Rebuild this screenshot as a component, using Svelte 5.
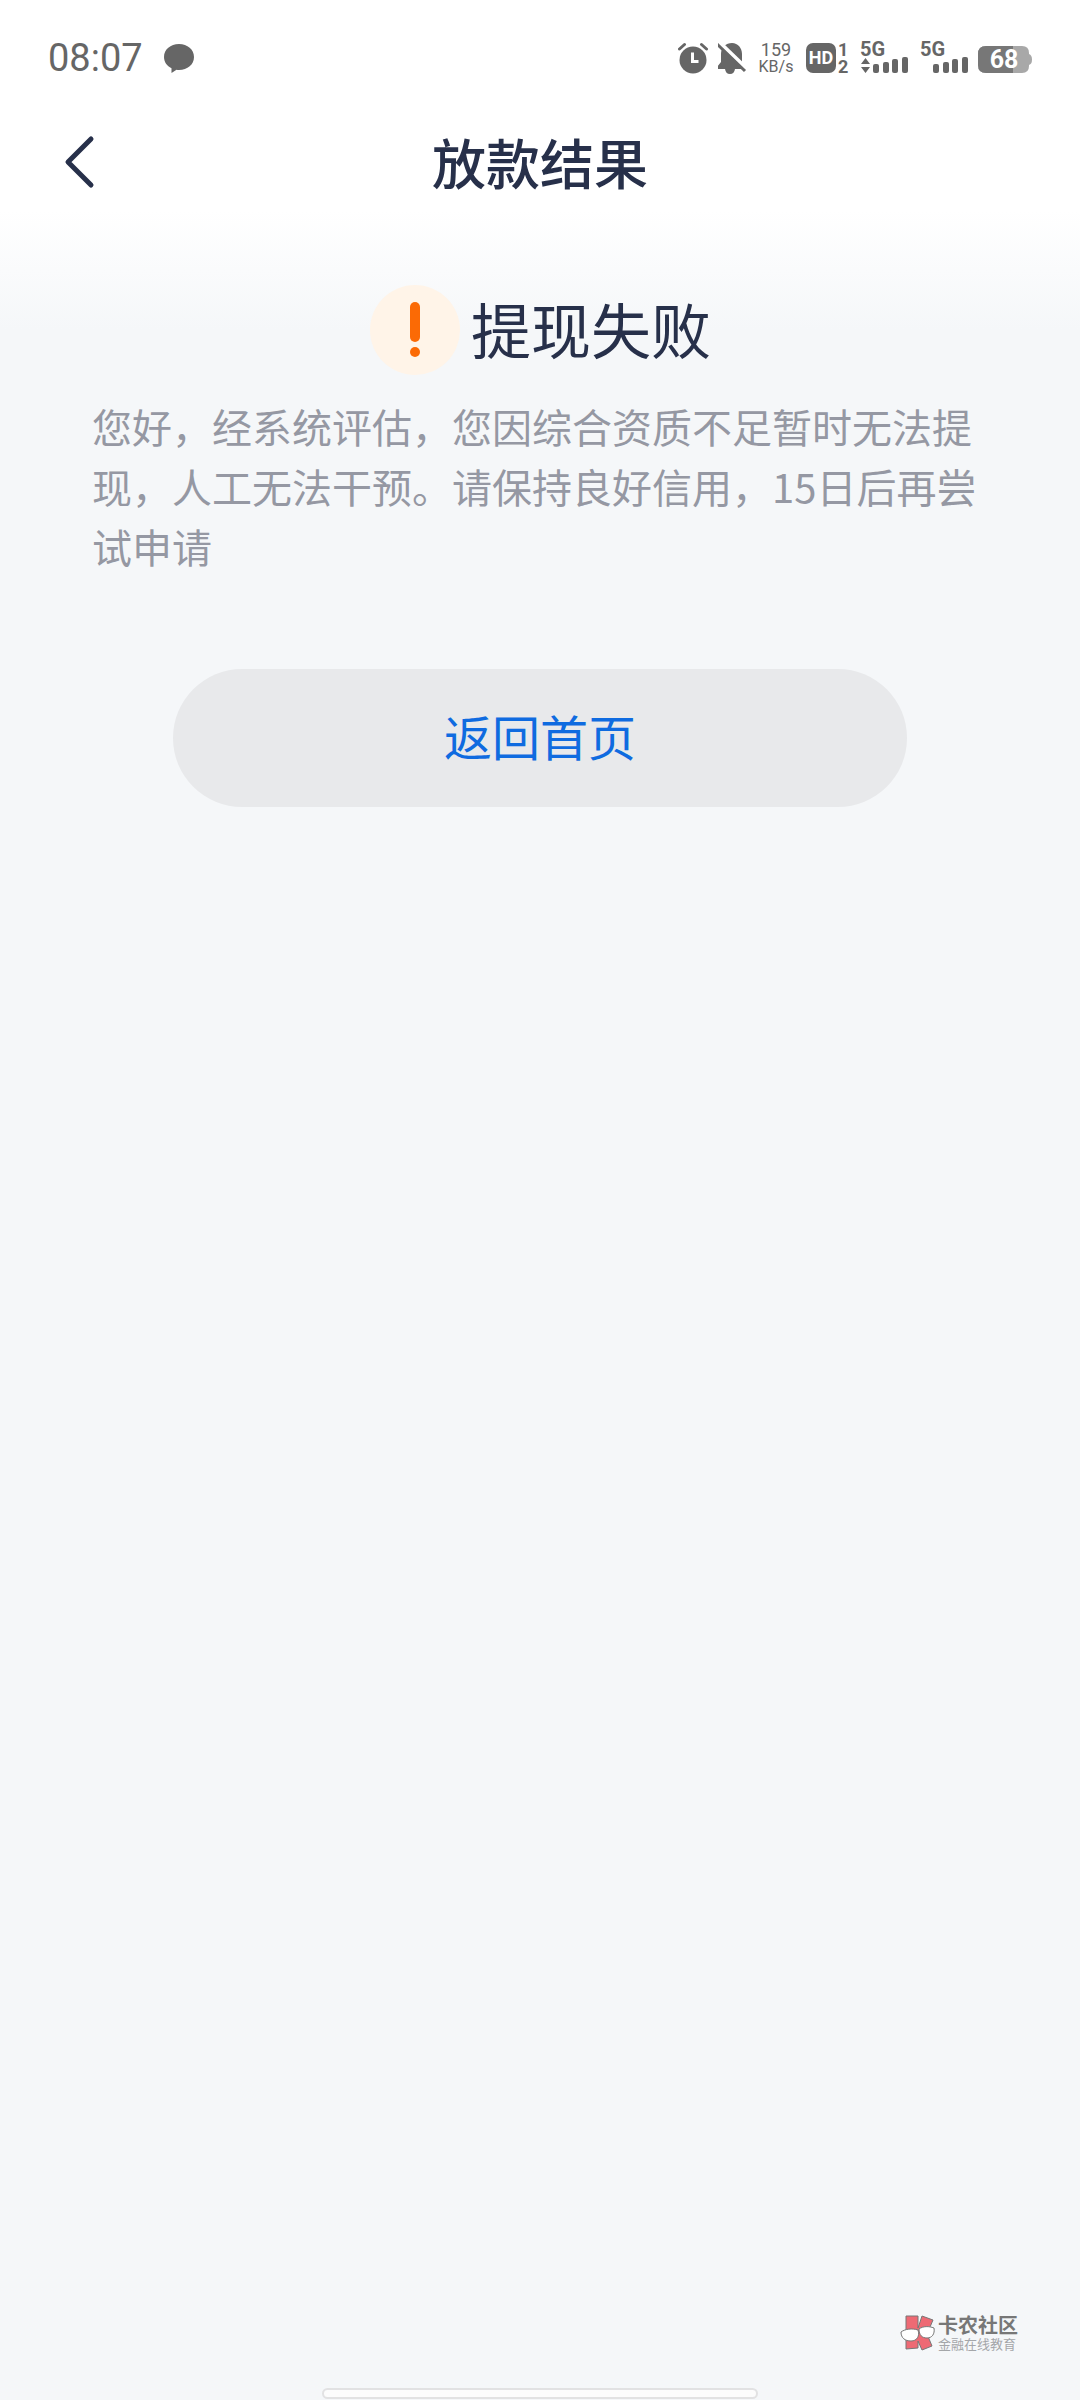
<script lang="ts">
  let title: string = '放款结果';
  let status: string = '提现失败';
  let message: string =
    '您好，经系统评估，您因综合资质不足暂时无法提现，人工无法干预。请保持良好信用，15日后再尝试申请';

  let time: string = '08:07';
  let speed: string = '159';
  let battery: number = 68;

  // two SIM cards, only the first one carries data
  const sims = [{ data: true }, { data: false }];

  // signal bars: x offset and height
  const bars = [
    { x: 15, h: 9 },
    { x: 25, h: 11 },
    { x: 34, h: 14 },
    { x: 44, h: 16 }
  ];
</script>

<div class="page">
  <div class="statusbar">
    <div class="left">
      <span class="time">{time}</span>
      <svg width="32" height="30" viewBox="0 0 32 30" aria-hidden="true">
        <path d="M16 1C7.500 1 1 6.500 1 14c0 5 3 9 7.500 11.200V30l5-3.200c.8.100 1.600.200 2.500.200 8.500 0 15-5.500 15-13S24.500 1 16 1z" fill="#666" />
      </svg>
    </div>

    <div class="right">
      <svg width="32" height="32" viewBox="0 0 32 32" aria-hidden="true">
        <circle cx="15" cy="18" r="13.500" fill="#666" />
        <path d="M1.500 7L6.500 2.500M28.500 7L23.500 2.500" stroke="#666" stroke-width="3" stroke-linecap="round" />
        <path d="M14.500 10.500v9h6" fill="none" stroke="#fff" stroke-width="3" />
      </svg>

      <svg width="32" height="32" viewBox="0 0 32 32" aria-hidden="true">
        <path d="M14 1C8 1 3 5.500 3 12v8l-4 5v2h8c.5 3 2 5 5 5s4.500-2 5-5h7V12c0-6-4-11-10-11z" fill="#666" />
        <path d="M1 0l28 27" stroke="#fff" stroke-width="4" />
        <path d="M-1 2l28 27" stroke="#666" stroke-width="3" />
      </svg>

      <div class="speed">
        <span>{speed}</span>
        <span class="unit">KB/s</span>
      </div>

      <div class="volte">
        <span class="hd">HD</span>
        <div class="slots">
          <span>1</span>
          <span>2</span>
        </div>
      </div>

      {#each sims as sim}
        <svg class="label" width="52" height="32" viewBox="0 0 52 32" aria-hidden="true">
          <text x="2" y="14" font-size="20">5G</text>
          {#if sim.data}
            <path d="M3 22l4.500-6 4.500 6zM3 25h9l-4.500 6z" fill="#666" />
          {/if}
          {#each bars as bar}
            <rect x={bar.x} y={31 - bar.h} width="6" height={bar.h} rx="2" fill="#666" />
          {/each}
        </svg>
      {/each}

      <svg class="label" width="54" height="32" viewBox="0 0 54 32" aria-hidden="true">
        <path d="M8 4h36q7 0 7 7v1q3 1 3 5.500t-3 5.500v1q0 7-7 7H8q-8 0-8-8V12q0-8 8-8z" fill="#a8a8a8" />
        <path d="M8 4h27v27H8q-8 0-8-8V12q0-8 8-8z" fill="#777" />
        <text class="level" x="26" y="26" font-size="25" text-anchor="middle">{battery}</text>
      </svg>
    </div>
  </div>

  <header>
    <button class="back" aria-label="返回">
      <svg width="32" height="56" viewBox="0 0 32 56" aria-hidden="true">
        <path d="M27 5L4 28l23 23" fill="none" stroke="#27304a" stroke-width="5" stroke-linecap="round" stroke-linejoin="round" />
      </svg>
    </button>
    <h1>{title}</h1>
  </header>

  <main>
    <div class="result">
      <svg width="92" height="92" viewBox="0 0 92 92" aria-hidden="true">
        <circle cx="46" cy="46" r="45" fill="#fff4e8" />
        <rect x="41" y="18" width="10" height="40" rx="5" fill="#fb6a05" />
        <circle cx="46" cy="68" r="5" fill="#fb6a05" />
      </svg>
      <h2>{status}</h2>
    </div>

    <p>{message}</p>

    <button class="home">返回首页</button>
  </main>

  <footer>
    <div class="brand">
      <svg width="38" height="38" viewBox="0 0 38 38" aria-hidden="true">
        <path d="M8 2h12v12l4-12 11 4-6 14 5 12-10 4-4-9v7l-12 1z" fill="#ee6a74" stroke="#777" stroke-width="1" />
        <path d="M3 18c4-3 11-4 17-2 2 6-1 11-7 11S3 24 3 18zM21 15c4-3 10-3 15-1 1 6-2 10-7 10s-8-3-8-9z" fill="#fff" stroke="#777" stroke-width="1" />
      </svg>
      <div class="names">
        <span class="name">卡农社区</span>
        <span class="sub">金融在线教育</span>
      </div>
    </div>
    <div class="indicator"></div>
  </footer>
</div>

<style>
  :global(body) {
    background: #f5f7f9;
  }
  .page {
    min-height: 100vh;
    box-sizing: border-box;
    display: flex;
    flex-direction: column;
    background: linear-gradient(#fff 210px, #f5f7f9 330px);
    color: #27304a;
    font-family: "Noto Sans CJK SC", sans-serif;
  }
  .statusbar {
    display: flex;
    justify-content: space-between;
    align-items: center;
    height: 116px;
    padding: 0 48px;
    color: #666;
    font-family: Roboto, sans-serif;
  }
  .left {
    display: flex;
    align-items: center;
    gap: 20px;
  }
  .right {
    display: flex;
    align-items: center;
    gap: 8px;
  }
  .time {
    font-size: 38px;
    line-height: 40px;
  }
  .speed {
    display: flex;
    flex-direction: column;
    align-items: center;
    width: 36px;
    margin-right: 4px;
    font-size: 18px;
    line-height: 18px;
  }
  .unit {
    font-size: 16px;
    line-height: 16px;
  }
  .volte {
    display: flex;
    align-items: center;
    gap: 2px;
    width: 44px;
    font-weight: 700;
  }
  .hd {
    width: 30px;
    border-radius: 7px;
    background: #666;
    color: #fff;
    text-align: center;
    font-size: 18px;
    line-height: 30px;
  }
  .slots {
    display: flex;
    flex-direction: column;
    font-size: 18px;
    line-height: 17px;
  }
  .label {
    overflow: visible;
    font-weight: 700;
    fill: #666;
  }
  .level {
    fill: #fff;
  }
  header {
    display: grid;
    grid-template-columns: 96px 1fr 96px;
    align-items: center;
    height: 92px;
  }
  button {
    border: none;
    font-family: inherit;
    cursor: pointer;
  }
  .back {
    display: flex;
    justify-content: flex-end;
    padding: 0;
    background: none;
  }
  h1 {
    margin: 0;
    text-align: center;
    font-size: 54px;
    line-height: 80px;
    font-weight: 500;
  }
  main {
    flex: 1;
    padding: 76px 92px 0;
  }
  .result {
    display: flex;
    justify-content: center;
    align-items: center;
    gap: 10px;
  }
  h2 {
    margin: 0;
    padding-bottom: 4px;
    font-size: 60px;
    line-height: 88px;
    font-weight: 400;
  }
  p {
    margin: 20px 0 93px;
    color: #9598a3;
    font-size: 40px;
    line-height: 60px;
  }
  .home {
    display: block;
    width: 82%;
    margin: 0 auto;
    padding: 30px 0 36px;
    border-radius: 72px;
    background: #e8e9eb;
    color: #0f6be0;
    font-size: 48px;
    line-height: 72px;
  }
  footer {
    display: flex;
    flex-direction: column;
    align-items: center;
    gap: 36px;
    padding-bottom: 1px;
  }
  .brand {
    display: flex;
    align-items: center;
    align-self: flex-end;
    gap: 2px;
    margin-right: 62px;
  }
  .names {
    display: flex;
    flex-direction: column;
    color: #777;
  }
  .name {
    font-size: 20px;
    line-height: 22px;
    font-weight: 700;
  }
  .sub {
    color: #a4a6a9;
    font-size: 13px;
    line-height: 16px;
  }
  .indicator {
    width: 40%;
    height: 7px;
    border: 2px solid #e2e2e3;
    border-radius: 6px;
    background: #fcfcfc;
  }
</style>
